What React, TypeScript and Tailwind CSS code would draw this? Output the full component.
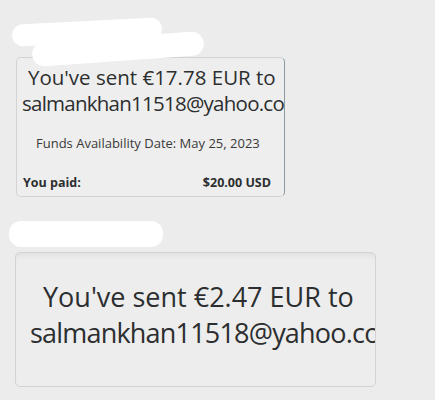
export default function App() {
  return (
    <div
      className="relative h-[400px] w-[435px] overflow-hidden bg-[#ececec] text-[#2c2e2f]"
      style={{ fontFamily: '"Open Sans", "Noto Sans", sans-serif' }}
    >
      {/* redaction marks */}
      <div className="absolute left-[12px] top-[21px] h-[22px] w-[150px] -rotate-[3deg] rounded-full bg-white" />
      <div className="absolute left-[32px] top-[37px] h-[24px] w-[172px] -rotate-[4deg] rounded-full bg-white" />
      <div className="absolute left-[9px] top-[221px] h-[26px] w-[154px] rounded-[12px] bg-white" />

      <div className="flex flex-col pl-[16px] pt-[57px]">
        <div className="flex h-[140px] w-[269px] flex-col overflow-hidden rounded-[5px] border border-[#d3d3d3] border-r-[#8a9aa2] bg-[#eeeeee]">
          <div className="mt-[6px] whitespace-nowrap pl-[11px] text-[20.5px] leading-[26px]">
            You've sent €17.78 EUR to
          </div>
          <div className="whitespace-nowrap pl-[5px] text-[20.5px] leading-[27px] tracking-[-0.75px]">
            salmankhan11518@yahoo.com
          </div>
          <div className="mt-[17px] whitespace-nowrap pl-[19px] text-[13px] leading-[18px] text-[#3a3a3a]">
            Funds Availability Date: May 25, 2023
          </div>
          <div className="mt-[23px] flex items-center justify-between pl-[6px] pr-[13px] text-[12.5px] font-bold leading-[16px]">
            <span>You paid:</span>
            <span>$20.00 USD</span>
          </div>
        </div>

        <div className="mt-[55px] flex h-[135px] w-[361px] -translate-x-[1px] flex-col overflow-hidden rounded-[5px] border border-[#d3d3d3] bg-[#ededed] shadow-[inset_0_6px_6px_-4px_rgba(0,0,0,0.06)]">
          <div className="mt-[26px] whitespace-nowrap pl-[27px] text-[27px] leading-[36px]">
            You've sent €2.47 EUR to
          </div>
          <div className="whitespace-nowrap pl-[14px] text-[27px] leading-[36px] tracking-[-0.8px]">
            salmankhan11518@yahoo.com
          </div>
        </div>
      </div>
    </div>
  );
}
